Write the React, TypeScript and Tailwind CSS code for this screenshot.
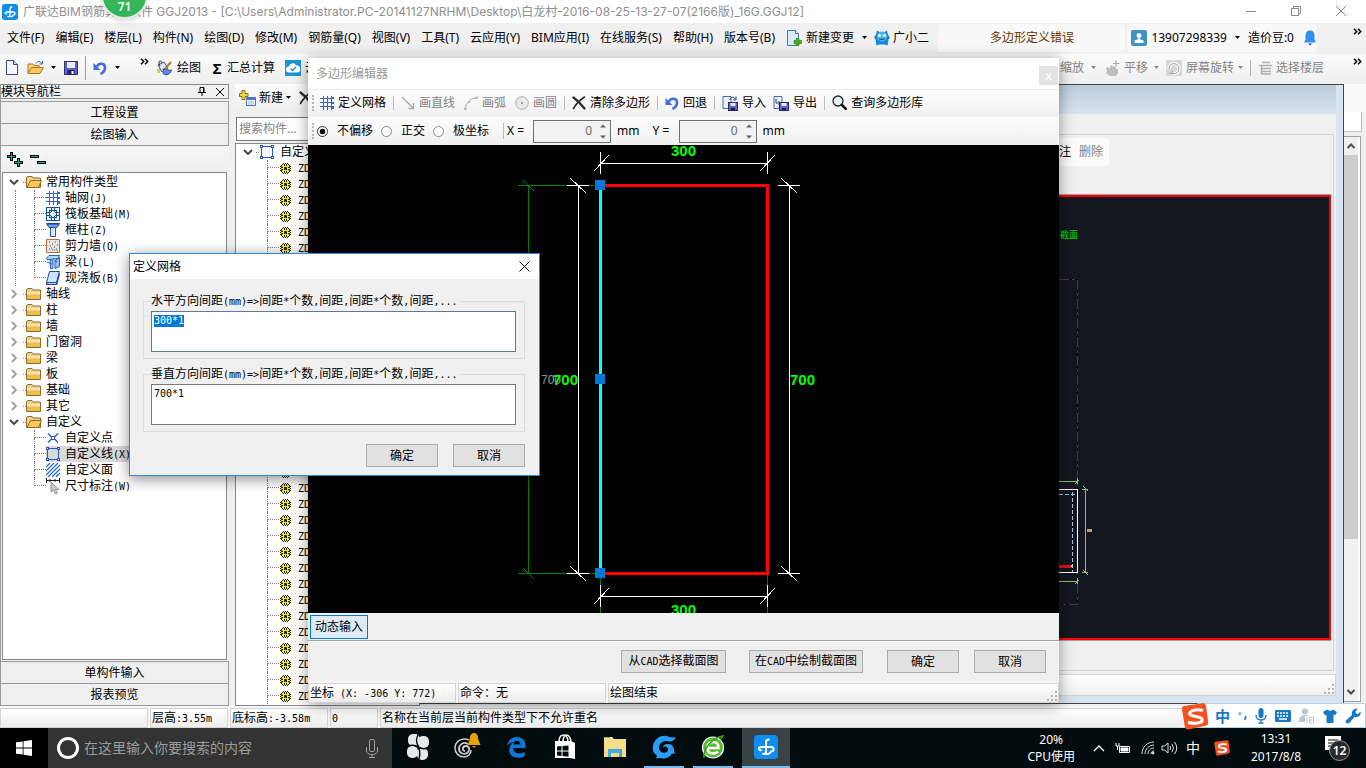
import type { ReactNode } from "react";
import clsx from "clsx";

interface IconProps {
  className?: string;
}

interface TreeItem {
  label: string;
  icon?: ReactNode;
  open?: boolean;
  selected?: boolean;
  children?: TreeItem[];
}

/* ---------- text ---------- */

// 宋体风格：中文 12px，西文半角 6px
function Song({ children }: { children: string }) {
  return (
    <span className="whitespace-pre text-[12px] leading-4">
      {children.split(/([\x20-\x7e]+)/).map((part, i) =>
        i % 2 === 1 ? (
          <span key={i} className="font-['DejaVu_Sans_Mono',monospace] text-[10px]">
            {part}
          </span>
        ) : (
          part
        ),
      )}
    </span>
  );
}

/* ---------- icons ---------- */

function Caret({ className }: IconProps) {
  return (
    <svg viewBox="0 0 5 3" className={clsx("h-[3px] w-[5px] shrink-0", className)} fill="currentColor">
      <path d="M0 0h5L2.5 3z" />
    </svg>
  );
}

function More() {
  return (
    <svg viewBox="0 0 9 7" className="h-[7px] w-[9px] shrink-0" fill="none" stroke="#000" strokeWidth="1.5">
      <path d="M1 .8l2.7 2.7L1 6.2M5 .8l2.7 2.7L5 6.2" />
    </svg>
  );
}

function LogoIcon({ className }: IconProps) {
  return (
    <svg viewBox="0 0 24 24" className={className} fill="none" stroke="#fff" strokeWidth="2" strokeLinecap="round">
      <rect width="24" height="24" rx="4" fill="#0f8ef2" stroke="none" />
      <path d="M12 12V7q0-2.500 2.800-2.500M12 12v4.500q0 2.500-3 2.500M12 12H7q-2 0-2 1.500t2 1.800M12 12h5q2.500 0 2.500 2.200T17 16.500M12 19h1q3 0 4-2.500" />
    </svg>
  );
}

function NewFileIcon() {
  return (
    <svg viewBox="0 0 12 15" className="h-[15px] w-3 shrink-0">
      <path d="M.5.5h7l4 4v10H.5z" fill="#f4f8fd" stroke="#33507c" />
      <path d="M7.500.5v4h4" fill="#c8d8ee" stroke="#33507c" />
    </svg>
  );
}

function OpenIcon() {
  return (
    <svg viewBox="0 0 17 15" className="h-[15px] w-[17px] shrink-0">
      <path d="M1 13V4h5l1 1.500h5V8" fill="#f5d77c" stroke="#a3772b" />
      <path d="M1 13.500L4.500 7.500h12L13 13.500z" fill="#f9c95b" stroke="#a3772b" />
      <path d="M9 3.500c2-3 4.500-2.500 5.500 0M15.500 1v3h-3" fill="none" stroke="#3c5da0" />
    </svg>
  );
}

function SaveIcon() {
  return (
    <svg viewBox="0 0 14 14" className="h-3.5 w-3.5 shrink-0">
      <rect x=".5" y=".5" width="13" height="13" fill="#5a5ed0" stroke="#30337c" />
      <rect x="3" y="1" width="8" height="6" fill="#e9ecf9" />
      <rect x="3.500" y="9" width="7" height="5" fill="#23265c" />
      <rect x="7.500" y="10" width="2" height="3" fill="#fff" />
    </svg>
  );
}

function UndoIcon() {
  return (
    <svg viewBox="0 0 14 14" className="h-3.5 w-3.5 shrink-0">
      <path d="M4 5.500C6 1.500 12 2 12 6.500c0 3-1.500 5-4.500 6.500" fill="none" stroke="#3f6fd8" strokeWidth="2.600" />
      <path d="M.5 2v7h7z" fill="#3f6fd8" />
    </svg>
  );
}

function PaintIcon() {
  return (
    <svg viewBox="0 0 17 16" className="h-4 w-[17px] shrink-0">
      <path d="M2 5l6-3 4 6-6 4z" fill="#dbe6f5" stroke="#3c5684" />
      <path d="M4 6C1 1 5-1 6 3" fill="none" stroke="#222" />
      <path d="M15 2L8 10" stroke="#b57b2c" strokeWidth="2" />
      <path d="M7 9c4 0 6 2 8.500 1-1 4-5 6-8 4-1-1.500 0-3-.5-5z" fill="#5c8ce0" stroke="#2f4f92" />
      <path d="M1 9h3v4H2z" fill="#e5c34b" />
    </svg>
  );
}

function CloudIcon() {
  return (
    <svg viewBox="0 0 16 16" className="h-4 w-4 shrink-0">
      <rect width="16" height="16" fill="#1d93d8" />
      <path d="M4 12.500a3 3 0 0 1 0-6 4 4 0 0 1 7.500-1 3.500 3.500 0 0 1 .5 7z" fill="#fff" />
      <path d="M5.500 8.500l2 2 3.500-3.500" fill="none" stroke="#1d93d8" strokeWidth="1.300" />
    </svg>
  );
}

function GridIcon() {
  return (
    <svg viewBox="0 0 14 14" className="h-3.5 w-3.5 shrink-0" shapeRendering="crispEdges">
      <path d="M0 2.500h14M0 6.500h14M0 10.500h14M3.500 0v14M7.500 0v14M11.500 0v14" stroke="#2f66d0" fill="none" />
      <path d="M12 1h2v2h-2zM12 6h2v2h-2zM12 11h2v2h-2z" fill="#2f66d0" />
    </svg>
  );
}

function CrossIcon() {
  return (
    <svg viewBox="0 0 14 14" className="h-3.5 w-3.5 shrink-0" fill="none" stroke="#2a2a2a" strokeLinecap="round">
      <path d="M1.500 1.500C5 4 9 8 12.500 12.500" strokeWidth="2.200" />
      <path d="M12.500 1C8 4 4 8 1.500 12.500" strokeWidth="1.600" />
    </svg>
  );
}

function TransferIcon({ out }: { out?: boolean }) {
  return (
    <svg viewBox="0 0 16 16" className="h-4 w-4 shrink-0">
      <path d="M1 1.500h8v12H1z" fill="#eef3fb" stroke="#4d68a3" />
      <path d={out ? "M3 4v4h4M5.500 6l2 2-2 2" : "M8 5c0-3 4-4 5-1M14 1.500V5h-3"} fill="none" stroke="#1d3a7a" />
      <rect x="6.500" y="7.500" width="9" height="8" fill="#5f5fd0" stroke="#29296e" />
      <rect x="8.500" y="8" width="5" height="3" fill="#e8e8fa" />
      <rect x="9" y="13" width="4" height="2.500" fill="#1c1c50" />
    </svg>
  );
}

function SearchIcon() {
  return (
    <svg viewBox="0 0 15 15" className="h-[15px] w-[15px] shrink-0">
      <circle cx="6" cy="6" r="5" fill="#dff1fb" stroke="#222" strokeWidth="1.300" />
      <path d="M9.800 9.800l4 4" stroke="#111" strokeWidth="2.600" strokeLinecap="round" />
    </svg>
  );
}

function FolderIcon({ open }: { open?: boolean }) {
  return (
    <svg viewBox="0 0 16 12" className="h-3 w-4 shrink-0">
      <path d="M.5 11.500v-10L2 .5h4l1 1.500h7.500v9.500z" fill="#f4d488" stroke="#8d6b2f" />
      {open ? (
        <path d="M1 11.500l3.500-7h11l-3 7z" fill="#fcc858" stroke="#8d6b2f" />
      ) : (
        <path d="M1 4h13v7H1z" fill="#f2bb4c" />
      )}
      {!open && <path d="M1 4h13v2.500H1z" fill="#fbe5ac" />}
    </svg>
  );
}

function RaftIcon() {
  return (
    <svg viewBox="0 0 14 14" className="h-3.5 w-3.5" shapeRendering="crispEdges" fill="none">
      <path d="M0 0h14v14H0z" fill="#e8f2fc" />
      <path d="M.5.5h13v13H.5zM3.500 3.500h7v7h-7zM5.500 1v12M8.500 1v12M1 5.500h12M1 8.500h12" stroke="#17519a" />
      <path d="M5 5h4v4H5z" fill="#e8f2fc" />
    </svg>
  );
}

function ColumnIcon() {
  return (
    <svg viewBox="0 0 14 14" className="h-3.5 w-3.5">
      <path d="M.5.5h13l-2.500 4H3z" fill="#6d9de6" stroke="#2a4e92" />
      <path d="M4.500 4.500h5v9h-5z" fill="#d6e6fb" stroke="#2a5bb0" />
      <path d="M1 1h12" stroke="#173a78" />
    </svg>
  );
}

function WallIcon() {
  return (
    <svg viewBox="0 0 14 14" className="h-3.5 w-3.5">
      <path d="M.5.5h13v13H.5z" fill="#e6e4e2" stroke="#c46a3d" />
      <path d="M3 3h1M6 5h1M9 3h1M4 7h1M8 8h1M11 6h1M3 10h1M6 11h1M10 10h1M11 12h1M8 11h1M5 9h1" stroke="#555" />
    </svg>
  );
}

function BeamIcon() {
  return (
    <svg viewBox="0 0 14 14" className="h-3.5 w-3.5">
      <path d="M.5 3L3 .5h10.500L12 3.500 1 4.500z" fill="#b8dbf8" stroke="#2667b5" />
      <path d="M4 4.500l3 1v8H4.500zM9 5.500l4.500-3v9L9 13.500z" fill="#8fc2f2" stroke="#2667b5" />
      <path d="M1 7l5 2M7 4l4 3" stroke="#2667b5" />
    </svg>
  );
}

function SlabIcon() {
  return (
    <svg viewBox="0 0 14 14" className="h-3.5 w-3.5">
      <path d="M3.500.5h10l-3 11H.5z" fill="#cfe1fb" stroke="#1d4e9e" />
      <path d="M.5 11.500v2h10l3-11" fill="none" stroke="#1d4e9e" strokeWidth="1.500" />
    </svg>
  );
}

function PointIcon() {
  return (
    <svg viewBox="0 0 14 14" className="h-3.5 w-3.5" fill="none" stroke="#2a5cbf">
      <path d="M2 2.500l3.500 3.500M12 2.500L8.500 6M2 11.500L5.500 8M12 11.500L8.500 8" strokeWidth="1.400" />
      <rect x="5.500" y="5.500" width="3" height="3" />
    </svg>
  );
}

function PolyIcon() {
  return (
    <svg viewBox="0 0 14 14" className="h-3.5 w-3.5 shrink-0" shapeRendering="crispEdges">
      <path d="M1.500 1.500h11v11h-11z" fill="none" stroke="#2059c0" />
      <path d="M0 0h3v3H0zM11 0h3v3h-3zM0 11h3v3H0zM11 11h3v3h-3z" fill="#2059c0" />
      <path d="M1 1h1v1H1zM12 1h1v1h-1zM1 12h1v1H1zM12 12h1v1h-1z" fill="#fff" />
    </svg>
  );
}

function HatchIcon() {
  return (
    <svg viewBox="0 0 14 14" className="h-3.5 w-3.5" stroke="#1f5fe0" strokeWidth="1.200">
      <path d="M0 4l4-4M0 8l8-8M0 12L12 0M2 14L14 2M6 14l8-8M10 14l4-4" />
    </svg>
  );
}

function DimIcon() {
  return (
    <svg viewBox="0 0 14 16" className="h-4 w-3.5">
      <path d="M.5 0v5M13.500 0v5M0 2.500h14M4 1v3M9 1v3" stroke="#222" fill="none" />
      <path d="M5 4v10l2.500-2 2 4 2-1-2-3.500H13z" fill="#c9c9c9" stroke="#777" strokeWidth=".7" />
    </svg>
  );
}

function GearIcon() {
  return (
    <svg viewBox="0 0 11 11" className="h-[11px] w-[11px] shrink-0" shapeRendering="crispEdges">
      <path d="M3 0h1v1h1V0h1v1h1V0h1v1h1v1h1v1h1v1h-1v1h1v1h-1v1h1v1h-1v1h-1v1H8v1H7v-1H6v1H5v-1H4v1H3v-1H2V9H1V8H0V7h1V6H0V5h1V4H0V3h1V2h1V1h1z" fill="#2e2d08" />
      <path d="M3 1h1v1H3zM7 1h1v1H7zM5 1h1v3H5zM2 2h2v1H2zM7 2h2v1H7zM2 3h1v1H2zM8 3h1v1H8zM1 5h3v1H1zM7 5h3v1H7zM3 3h2v1H3zM6 3h2v1H6zM3 4h1v3H3zM7 4h1v3H7zM3 7h5v1H3zM5 7h1v3H5zM2 7h1v2H2zM8 7h1v2H8zM3 8h1v2H3zM7 8h1v2H7z" fill="#f2ec1a" />
    </svg>
  );
}

function NewItemIcon() {
  return (
    <svg viewBox="0 0 17 16" className="h-4 w-[17px] shrink-0">
      <path d="M3 .5h3v3h3v3H6v3H3v-3H.5v-3H3z" fill="#f3d33c" stroke="#8a7212" />
      <path d="M7.500 7.500h9v8h-9z" fill="#fff" stroke="#4b79c9" />
      <path d="M7.500 7.500h9v2.500h-9z" fill="#4b79c9" />
      <path d="M9 12h6M9 14h6" stroke="#8fb0e6" />
    </svg>
  );
}

function Chevron({ open }: { open?: boolean }) {
  return (
    <svg viewBox="0 0 10 10" className="h-2.5 w-2.5" fill="none" stroke={open ? "#404040" : "#a0a0a0"} strokeWidth="1.800">
      <path d={open ? "M1 3l4 4 4-4" : "M3 1l4 4-4 4"} />
    </svg>
  );
}

function SogouIcon({ className }: IconProps) {
  return (
    <svg viewBox="0 0 28 28" className={className}>
      <path d="M.5 6Q.2 3.500 3 3L22 .3q3-.3 3.400 2.500L27.700 20q.3 3-2.500 3.500L7 27.500q-3 .5-3.500-2.500z" fill="#f4511e" />
      <path
        d="M21 7.500C15 6 8 8 8.500 11.500c.5 3.500 13 1.500 13 6 0 3.500-8 4.500-13.500 2.800"
        fill="none"
        stroke="#fff"
        strokeWidth="3.200"
        strokeLinecap="round"
      />
    </svg>
  );
}

function Grip() {
  return (
    <svg viewBox="0 0 11 11" className="h-[11px] w-[11px] self-end" fill="#b5b5b5">
      <path d="M8 0h2v2H8zM4 4h2v2H4zM8 4h2v2H8zM0 8h2v2H0zM4 8h2v2H4zM8 8h2v2H8z" />
    </svg>
  );
}

/* ---------- shared controls ---------- */

function ToolButton({ icon, children, disabled }: { icon?: ReactNode; children: ReactNode; disabled?: boolean }) {
  return (
    <button
      type="button"
      className={clsx(
        "flex shrink-0 items-center gap-1 whitespace-nowrap leading-4",
        disabled ? "text-[#848484]" : "text-black",
      )}
    >
      {icon}
      {children}
    </button>
  );
}

function Separator() {
  return <span className="h-3.5 w-px shrink-0 bg-[#bdbdbd]" />;
}

function PushButton({ children, className }: { children: string; className?: string }) {
  return (
    <button
      type="button"
      className={clsx("flex h-[23px] items-center justify-center border border-[#adadad] bg-[#e1e1e1]", className)}
    >
      <Song>{children}</Song>
    </button>
  );
}

function StatusCell({ children, className }: { children?: string; className?: string }) {
  return (
    <div
      className={clsx(
        "flex items-center overflow-hidden border border-[#d4d4d4] bg-linear-to-b from-white to-[#ececec] pl-px",
        className,
      )}
    >
      {children && <Song>{children}</Song>}
    </div>
  );
}

/* ---------- main window header ---------- */

const menus = [
  "文件(F)",
  "编辑(E)",
  "楼层(L)",
  "构件(N)",
  "绘图(D)",
  "修改(M)",
  "钢筋量(Q)",
  "视图(V)",
  "工具(T)",
  "云应用(Y)",
  "BIM应用(I)",
  "在线服务(S)",
  "帮助(H)",
  "版本号(B)",
];

function TitleBar() {
  return (
    <header className="relative flex h-[23px] shrink-0 items-center bg-white pl-0.5">
      <LogoIcon className="h-4 w-4" />
      <h1 className="ml-[5px] whitespace-nowrap font-['Inter','Noto_Sans_CJK_SC',sans-serif] leading-4 text-[#8f8f8f]">
        广联达BIM钢筋算量软件 GGJ2013 - [C:\Users\Administrator.PC-20141127NRHM\Desktop\白龙村-2016-08-25-13-27-07(2166版)_16G.GGJ12]
      </h1>
      <div className="ml-auto flex items-center gap-[35px] pr-5 pb-0.5">
        <button type="button" aria-label="最小化">
          <svg viewBox="0 0 10 10" className="h-2.5 w-2.5" stroke="#888">
            <path d="M0 5.500h10" />
          </svg>
        </button>
        <button type="button" aria-label="还原">
          <svg viewBox="0 0 10 10" className="h-2.5 w-2.5" stroke="#888" fill="none">
            <path d="M.5 2.500h7v7h-7zM2.500 2.500v-2h7v7h-2" />
          </svg>
        </button>
        <button type="button" aria-label="关闭">
          <svg viewBox="0 0 10 10" className="h-2.5 w-2.5" stroke="#888">
            <path d="M0 0l10 10M10 0L0 10" />
          </svg>
        </button>
      </div>
      <div className="absolute -top-[27px] left-[101px] flex h-[46px] w-[47px] items-end justify-center rounded-full border-2 border-[#e2e8e2] bg-linear-to-b from-[#3dbb5c] to-[#2fb457] pb-0.5 text-[12px] font-semibold leading-4 text-white shadow-md">
        71
      </div>
    </header>
  );
}

function MenuBar() {
  return (
    <nav className="flex h-[31px] shrink-0 items-center bg-[#f0f0f0] pb-0.5 pl-[7px]">
      <div className="flex gap-[11px]">
        {menus.map((m) => (
          <button key={m} type="button" className="whitespace-nowrap leading-4">
            {m}
          </button>
        ))}
      </div>
      <button type="button" className="ml-3 flex shrink-0 items-center gap-1 whitespace-nowrap leading-4">
        <svg viewBox="0 0 15 16" className="h-4 w-[15px]">
          <path d="M.5.5h8l3 3v12H.5z" fill="#d6ebfb" stroke="#3e7db4" />
          <path d="M8.500.5v3h3" fill="#fff" stroke="#3e7db4" />
          <path d="M9 8.500h3v2h2.500v3H12v2H9v-2H7v-3h2z" fill="#49ad1f" stroke="#2b7a0d" strokeWidth=".6" />
        </svg>
        新建变更
        <Caret className="ml-1" />
      </button>
      <button type="button" className="ml-[7px] flex shrink-0 items-center gap-[3px] whitespace-nowrap leading-4">
        <svg viewBox="0 0 16 16" className="h-4 w-4">
          <path d="M3 .5l2.500 1.500h5L13 .5l1 4 2 3-1.500 2-1 6-3-1h-5l-3 1-1-6L0 7.500l2-3z" fill="#178ad6" />
          <circle cx="8" cy="6.500" r="5" fill="#4db5ee" />
          <circle cx="5.500" cy="5.500" r="1.500" fill="#fff" />
          <circle cx="10.500" cy="5.500" r="1.500" fill="#fff" />
          <path d="M5 8.500q3 2.500 6 0" stroke="#064b80" fill="none" />
        </svg>
        广小二
      </button>
      <div className="ml-auto flex h-full shrink-0 items-center">
        <div className="flex h-7 w-[187px] items-center justify-center rounded bg-[#f8f8f8] text-[#663300]">
          <span className="leading-4">多边形定义错误</span>
        </div>
        <div className="ml-0.5 flex h-7 items-center rounded bg-[#f8f8f8] pl-1">
          <svg viewBox="0 0 16 16" className="h-4 w-4">
            <rect width="16" height="16" rx="2" fill="#3f92c9" />
            <path d="M8 3a2.500 2.500 0 0 1 1.500 4.500L8.500 9l4 1.500V13h-9v-2.500l4-1.500-1-1.500A2.500 2.500 0 0 1 8 3z" fill="#fff" />
          </svg>
          <button type="button" className="ml-1 flex items-center gap-2 leading-4">
            13907298339
            <Caret />
          </button>
          <span className="ml-2 whitespace-nowrap leading-4">造价豆:0</span>
          <svg viewBox="0 0 14 16" className="ml-[9px] h-4 w-3.5">
            <path d="M7 .5c3 0 4.500 2 4.500 5v4L13 12.500H1l1.500-3v-4c0-3 1.500-5 4.500-5z" fill="#2f90ee" />
            <path d="M5 13.500h4L7 15.500z" fill="#1b4a80" />
          </svg>
        </div>
        <button type="button" aria-label="更多" className="mb-3 ml-9 mr-1">
          <More />
        </button>
      </div>
    </nav>
  );
}

function MainToolbar() {
  return (
    <div className="flex h-[30px] shrink-0 items-center bg-linear-to-b from-[#fbfbfb] to-[#efefef] pb-[3px] pl-1.5">
      <button type="button" aria-label="新建">
        <NewFileIcon />
      </button>
      <button type="button" aria-label="打开" className="ml-[9px] flex items-center gap-[7px]">
        <OpenIcon />
        <Caret />
      </button>
      <button type="button" aria-label="保存" className="ml-2">
        <SaveIcon />
      </button>
      <span className="ml-[7px] h-6 w-px bg-[#9c9c9c]" />
      <button type="button" aria-label="撤销" className="ml-[7px] flex items-center gap-2">
        <UndoIcon />
        <Caret />
      </button>
      <span className="mb-3 ml-5">
        <More />
      </span>
      <div className="ml-[7px] flex items-center gap-2.5">
        <ToolButton icon={<PaintIcon />}>绘图</ToolButton>
        <ToolButton icon={<span className="w-3 text-[15px] font-bold">Σ</span>}>汇总计算</ToolButton>
        <ToolButton icon={<CloudIcon />}>云检查</ToolButton>
      </div>
      <div className="mt-[7px] ml-[366px] h-[22px] w-[62px] border border-[#555] bg-white" />
      <div className="ml-auto flex items-center text-[#848484]">
        <ToolButton disabled>缩放</ToolButton>
        <Caret className="ml-[7px]" />
        <span className="ml-[9px]">
          <ToolButton
            disabled
            icon={
              <svg viewBox="0 0 15 16" className="h-4 w-[15px]">
                <path d="M1 8l2-1 2 2 0-3 2-1 1 2 2-1 1 3 2 0v4l-2 3H5l-4-3 1-2z" fill="#bdbdbd" />
                <path d="M11 0v7M8 3.500h6.500" stroke="#a5a5a5" />
              </svg>
            }
          >
            平移
          </ToolButton>
        </span>
        <Caret className="ml-1.5" />
        <span className="ml-[7px]">
          <ToolButton
            disabled
            icon={
              <svg viewBox="0 0 16 16" className="h-4 w-4" fill="none">
                <rect width="16" height="16" fill="#d9d9d9" />
                <path d="M3 9a5 5 0 1 1 4 4.500" stroke="#fff" strokeWidth="3" />
                <path d="M3 9a5 5 0 1 1 4 4.500M3 13l4 .5-1-3" stroke="#a4a4a4" />
              </svg>
            }
          >
            屏幕旋转
          </ToolButton>
        </span>
        <Caret className="ml-1" />
        <span className="ml-[7px] h-4 w-px bg-[#b4b4b4]" />
        <span className="ml-[7px]">
          <ToolButton
            disabled
            icon={
              <svg viewBox="0 0 14 14" className="h-3.5 w-3.5" fill="none" stroke="#b0b0b0" strokeWidth="1.500">
                <path d="M4 1.500h8M1 4.500h13M4 7.500h9M4 10.500h9M4 13h9M3.500 4.500v9" />
              </svg>
            }
          >
            选择楼层
          </ToolButton>
        </span>
        <button type="button" aria-label="更多" className="mb-3 ml-[29px] mr-1">
          <More />
        </button>
      </div>
    </div>
  );
}

/* ---------- navigation panel ---------- */

const navTree: TreeItem[] = [
  {
    label: "常用构件类型",
    open: true,
    children: [
      { label: "轴网(J)", icon: <GridIcon /> },
      { label: "筏板基础(M)", icon: <RaftIcon /> },
      { label: "框柱(Z)", icon: <ColumnIcon /> },
      { label: "剪力墙(Q)", icon: <WallIcon /> },
      { label: "梁(L)", icon: <BeamIcon /> },
      { label: "现浇板(B)", icon: <SlabIcon /> },
    ],
  },
  { label: "轴线" },
  { label: "柱" },
  { label: "墙" },
  { label: "门窗洞" },
  { label: "梁" },
  { label: "板" },
  { label: "基础" },
  { label: "其它" },
  {
    label: "自定义",
    open: true,
    children: [
      { label: "自定义点", icon: <PointIcon /> },
      { label: "自定义线(X)", icon: <PolyIcon />, selected: true },
      { label: "自定义面", icon: <HatchIcon /> },
      { label: "尺寸标注(W)", icon: <DimIcon /> },
    ],
  },
];

function Elbow({ last }: { last?: boolean }) {
  return (
    <span className="h-4 w-3 shrink-0">
      <span className="block h-2 border-b border-l border-dotted border-[#808080]" />
      {!last && <span className="block h-2 border-l border-dotted border-[#808080]" />}
    </span>
  );
}

function NavBranch({ item, lastBranch }: { item: TreeItem; lastBranch: boolean }) {
  const children = item.children ?? [];
  return (
    <li>
      <div className="flex h-4 items-center">
        <span className="flex w-5 justify-center pl-0.5">
          <Chevron open={item.open} />
        </span>
        <span className="w-[3px] border-t border-dotted border-[#808080]" />
        <FolderIcon open={item.open} />
        <span className="ml-1 leading-4">
          <Song>{item.label}</Song>
        </span>
      </div>
      {children.length > 0 && (
        <ul>
          {children.map((c, i) => (
            <li key={c.label} className="flex h-4 items-center">
              <span className={clsx("ml-3 h-4 w-[19px] shrink-0", !lastBranch && "border-l border-dotted border-[#808080]")} />
              <Elbow last={i === children.length - 1} />
              <span className={clsx("flex h-4 flex-1 items-center gap-[5px]", c.selected && "bg-[#d9d9d9]")}>
                {c.icon}
                <Song>{c.label}</Song>
              </span>
            </li>
          ))}
        </ul>
      )}
    </li>
  );
}

function NavButton({ children }: { children: string }) {
  return (
    <button
      type="button"
      className="flex h-[22px] w-full shrink-0 items-center justify-center border-r border-b border-[#9a9a9a] bg-[#f0f0f0]"
    >
      <Song>{children}</Song>
    </button>
  );
}

function NavPanel() {
  return (
    <aside className="flex w-[229px] shrink-0 flex-col border-l border-[#9a9a9a]">
      <div className="flex h-[15px] shrink-0 items-center border border-l-0 border-[#8a8a8a] pr-1">
        <Song>模块导航栏</Song>
        <button type="button" aria-label="固定" className="ml-auto">
          <svg viewBox="0 0 8 9" className="h-[9px] w-2" stroke="#000" fill="none">
            <path d="M2 .5h4v5H2zM0 5.500h8M4 5.500V9M5.500 1v4" />
          </svg>
        </button>
        <button type="button" aria-label="关闭" className="ml-2.5">
          <svg viewBox="0 0 8 8" className="h-2 w-2" stroke="#000">
            <path d="M0 0l8 8M8 0L0 8" />
          </svg>
        </button>
      </div>
      <div className="mt-0.5 shrink-0 border-t border-[#9a9a9a]">
        <NavButton>工程设置</NavButton>
        <NavButton>绘图输入</NavButton>
      </div>
      <div className="flex h-[26px] shrink-0 items-center gap-[7px] bg-linear-to-b from-[#f7f7f7] to-[#eee] pl-1.5">
        <button type="button" aria-label="全部展开">
          <svg viewBox="0 0 16 15" className="h-[15px] w-4" shapeRendering="crispEdges">
            <path d="M3 0h3v3h3v3H6v3H3V6H0V3h3zM10 6h3v3h3v3h-3v3h-3v-3H7V9h3z" fill="#000" />
            <path d="M4 1h1v3h3v1H5v3H4V5H1V4h3zM11 7h1v3h3v1h-3v3h-1v-3H8v-1h3z" fill="#1da899" />
          </svg>
        </button>
        <button type="button" aria-label="全部折叠">
          <svg viewBox="0 0 16 15" className="h-[15px] w-4" shapeRendering="crispEdges">
            <path d="M0 3h9v3H0zM7 9h9v3H7z" fill="#000" />
            <path d="M1 4h7v1H1zM8 10h7v1H8z" fill="#1da899" />
          </svg>
        </button>
      </div>
      <ul className="mr-0.5 ml-px flex-1 overflow-hidden border border-[#828790] bg-white pt-px">
        {navTree.map((t, i) => (
          <NavBranch key={`${t.label}${i}`} item={t} lastBranch={i === navTree.length - 1} />
        ))}
      </ul>
      <div className="mt-px shrink-0 border-t border-[#9a9a9a]">
        <NavButton>单构件输入</NavButton>
        <NavButton>报表预览</NavButton>
      </div>
    </aside>
  );
}

/* ---------- component list ---------- */

function ComponentPanel() {
  const rows = Array.from({ length: 34 }, (_, i) => `ZDX-${i + 1}`);
  return (
    <section className="ml-1.5 flex w-[185px] shrink-0 flex-col">
      <div className="flex h-7 shrink-0 items-center gap-1 bg-linear-to-b from-[#fbfbfb] to-[#efefef] pb-px pl-1">
        <button type="button" className="flex items-center gap-[3px] leading-4">
          <NewItemIcon />
          新建
          <Caret />
        </button>
        <button type="button" aria-label="删除" className="ml-1">
          <CrossIcon />
        </button>
      </div>
      <input
        type="text"
        aria-label="搜索构件"
        placeholder="搜索构件..."
        className="mt-[5px] ml-px h-6 shrink-0 border border-[#7a7a7a] bg-white px-0.5 pb-0.5 leading-4 placeholder:text-[#848484]"
      />
      <div className="mt-0.5 flex-1 overflow-hidden border border-[#828790] bg-white">
        <div className="flex h-4 items-center">
          <span className="flex w-5 justify-center pl-1">
            <Chevron open />
          </span>
          <span className="mr-px w-[3px] border-t border-dotted border-[#808080]" />
          <PolyIcon />
          <span className="ml-1.5 leading-4">
            <Song>自定义线</Song>
          </span>
        </div>
        <ul className="pl-[31px]">
          {rows.map((r) => (
            <li key={r} className="flex h-4 items-center">
              <Elbow />
              <span className="ml-px flex">
                <GearIcon />
              </span>
              <span className="ml-[7px] leading-4">
                <Song>{r}</Song>
              </span>
            </li>
          ))}
        </ul>
      </div>
    </section>
  );
}

/* ---------- CAD window behind the dialogs ---------- */

function CadWindow() {
  return (
    <section className="mb-0.5 flex min-w-0 flex-1 flex-col border-t border-r border-b border-[#444] bg-[#d7e3f1] pr-[7px] pb-[7px]">
      <div className="h-[29px] shrink-0 bg-linear-to-b from-[#bccbdb] to-[#d7e3f1]" />
      <div className="flex flex-1 flex-col bg-[#f0f0f0] pt-5">
        <div className="mr-0.5 flex flex-1 flex-col border-y border-r border-[#d5d5d5] pr-0.5">
          <div className="mt-[3px] flex h-[57px] shrink-0 justify-end border-b border-[#a0a0a0]">
            <div className="mr-[222px] flex h-7 items-center gap-2 rounded bg-[#fafafa] pr-1.5 pl-2 leading-4">
              <button type="button">标注</button>
              <button type="button" className="text-[#848484]">
                删除
              </button>
            </div>
          </div>
          <div className="flex flex-1 justify-end overflow-hidden border-2 border-[#f00] bg-[#14171f]">
            <svg viewBox="1059 197 270 440" className="h-[440px] w-[270px]" fill="none" shapeRendering="crispEdges">
              <text x="1060" y="238" fontSize="9" fill="#00e000" fontFamily="Noto Sans CJK SC">
                截面
              </text>
              <path d="M1059 279.500h18.500V604H1059" stroke="#000" />
              <path d="M1059 279.500h18.500V604H1059" stroke="#343b47" strokeDasharray="10 3 3 3" />
              <path d="M1059 481.500h19M1077.500 478v6M1075 484l4-4M1059 581.500h19M1077.500 578v6M1075 584l4-4" stroke="#7cc867" />
              <path d="M1059 489.500h18.500v83H1059" stroke="#fff" />
              <path d="M1059 494.500h18M1072.500 491v81" stroke="#000" />
              <path d="M1059 494.500h18M1072.500 492v80" stroke="#9cc8f0" strokeDasharray="4 2" />
              <path d="M1059 566.500h13" stroke="#d8141e" strokeWidth="3" />
              <path d="M1071 565h2v2h-2z" fill="#f0e060" />
              <path d="M1085.500 489v84M1082 489.500h6M1083 486l5 5M1082 572.500h6M1083 570l5 5" stroke="#7cc867" />
              <path d="M1087 530.500h5" stroke="#c09a78" strokeWidth="3" />
            </svg>
          </div>
          <div className="h-[30px] shrink-0 border-t border-[#a0a0a0]" />
        </div>
        <div className="mt-[3px] flex h-[22px] shrink-0 justify-end border border-[#d4d4d4] bg-linear-to-b from-white to-[#f0f0f0]">
          <Grip />
        </div>
      </div>
    </section>
  );
}

function ScrollColumn() {
  return (
    <div className="flex w-[22px] shrink-0 flex-col">
      <div className="h-7 shrink-0 bg-[#fafafa]" />
      <div className="mr-1 h-5 shrink-0 border-r border-b border-[#c0c0c0] bg-white" />
      <div className="mt-1 mr-[5px] mb-1 flex flex-1 flex-col border-y border-r border-[#a0a0a0] bg-white pr-0.5">
        <div className="flex flex-1 flex-col bg-[#f0f0f0]">
          <div className="flex h-[18px] shrink-0 items-center justify-center">
            <svg viewBox="0 0 8 6" className="h-1.5 w-2" fill="none" stroke="#505050" strokeWidth="2">
              <path d="M.5 5L4 1.500 7.500 5" />
            </svg>
          </div>
          <div className="flex-[384] bg-[#cdcdcd]" />
          <div className="flex-[144]" />
          <div className="flex h-[18px] shrink-0 items-center justify-center">
            <svg viewBox="0 0 8 6" className="h-1.5 w-2" fill="none" stroke="#505050" strokeWidth="2">
              <path d="M.5 1L4 4.500 7.500 1" />
            </svg>
          </div>
        </div>
      </div>
    </div>
  );
}

/* ---------- polygon editor ---------- */

const offsets = ["不偏移", "正交", "极坐标"];

function OffsetInput({ axis }: { axis: string }) {
  return (
    <label className="flex items-center gap-1.5 leading-4">
      <span className="w-5 whitespace-nowrap">{axis} =</span>
      <span className="flex h-[23px] w-[78px] items-center border border-[#6f6f6f] bg-[#f2f2f2] pr-1">
        <input
          type="text"
          defaultValue="0"
          className="w-full min-w-0 bg-transparent pr-2 text-right leading-4 text-[#6d6d6d]"
        />
        <svg viewBox="0 0 6 15" className="h-[15px] w-1.5 shrink-0" fill="#606060">
          <path d="M0 3.500h6L3 .5zM0 11.500h6l-3 3z" />
        </svg>
      </span>
      <span>mm</span>
    </label>
  );
}

function PolygonCanvas() {
  return (
    <svg
      viewBox="308 145 751 468"
      preserveAspectRatio="xMidYMin slice"
      className="min-h-0 w-full flex-1 bg-black"
      fill="none"
      shapeRendering="crispEdges"
    >
      <g stroke="#008000">
        <path d="M518 185.500h80M518 573.500h80M528.500 185v388M600.500 573v40M767.500 573v40" />
        <path d="M523 180l11 11M523 568l11 11" />
      </g>
      <g stroke="#fff">
        <path d="M600 163.500h168M600.500 152v22M767.500 152v22M594 171l15-16M760 171l15-16" />
        <path d="M600 596.500h168M600.500 585v22M767.500 585v22M594 604l15-16M760 604l15-16" />
        <path d="M578.500 185v388M567 185.500h22M567 573.500h22M570 178l16 15M570 566l16 15" />
        <path d="M789.500 185v388M778 185.500h22M778 573.500h22M781 178l16 15M781 566l16 15" />
      </g>
      <path d="M600 185.500h167.500v388H600" stroke="#f00" strokeWidth="3" />
      <path d="M600.500 185v388" stroke="#0ff" strokeWidth="3" />
      <path d="M595 180h10v10h-10zM595 374h10v10h-10zM595 568h10v10h-10z" fill="#0078d7" />
      <text x="541" y="384" fontSize="12" fill="#a0a0a0" fontFamily="Liberation Sans">
        700
      </text>
      <g fill="#0f0" fontFamily="Liberation Sans" fontWeight="bold" fontSize="15">
        <text x="671" y="156">300</text>
        <text x="671" y="615">300</text>
        <text x="553" y="385">700</text>
        <text x="790" y="385">700</text>
      </g>
    </svg>
  );
}

function PolygonEditor() {
  return (
    <section
      aria-label="多边形编辑器"
      className="absolute top-[58px] left-[308px] flex h-[645px] w-[751px] flex-col bg-[#f0f0f0] shadow-[0_2px_14px_rgba(0,0,0,0.4)]"
    >
      <div className="flex h-[31px] shrink-0 items-center justify-between bg-white pr-px pl-2">
        <h2 className="leading-4 text-[#999]">多边形编辑器</h2>
        <button
          type="button"
          aria-label="关闭"
          className="mt-1 flex h-[19px] w-[19px] items-center justify-center bg-[#e3e3e3] leading-4 text-white"
        >
          x
        </button>
      </div>

      <div className="flex h-7 shrink-0 items-center gap-[7px] border-t border-[#ededed] bg-linear-to-b from-[#fdfdfd] to-[#f0f0f0] pb-0.5 pl-1">
        <span className="-mr-0.5 h-4 w-[3px] border-l-2 border-dotted border-[#b8b8b8]" />
        <ToolButton icon={<GridIcon />}>定义网格</ToolButton>
        <Separator />
        <div className="flex gap-[9px]">
          <ToolButton
            disabled
            icon={
              <svg viewBox="0 0 14 14" className="h-3.5 w-3.5" fill="none" stroke="#a8a8a8" strokeWidth="1.300">
                <path d="M1 1l11 11M12.500 7v5.500H7.500" />
              </svg>
            }
          >
            画直线
          </ToolButton>
          <ToolButton
            disabled
            icon={
              <svg viewBox="0 0 14 14" className="h-3.5 w-3.5" fill="none" stroke="#a8a8a8">
                <path d="M1.500 12.500C2 7 6 2 12 2" />
                <path d="M0 11.500h2.500V14H0zM11.500.5H14V3h-2.500zM4 5h2v2H4z" fill="#bbb" stroke="none" />
              </svg>
            }
          >
            画弧
          </ToolButton>
          <ToolButton
            disabled
            icon={
              <svg viewBox="0 0 14 14" className="h-3.5 w-3.5" fill="none" stroke="#b0b0b0">
                <circle cx="7" cy="7" r="6.300" fill="#e8e8e8" />
                <path d="M6 6h2v2H6z" fill="#a0a0a0" stroke="none" />
              </svg>
            }
          >
            画圆
          </ToolButton>
        </div>
        <Separator />
        <ToolButton icon={<CrossIcon />}>清除多边形</ToolButton>
        <Separator />
        <ToolButton icon={<UndoIcon />}>回退</ToolButton>
        <Separator />
        <ToolButton icon={<TransferIcon />}>导入</ToolButton>
        <ToolButton icon={<TransferIcon out />}>导出</ToolButton>
        <Separator />
        <ToolButton icon={<SearchIcon />}>查询多边形库</ToolButton>
      </div>

      <div className="flex h-7 shrink-0 items-center bg-linear-to-b from-[#fdfdfd] to-[#f0f0f0] pl-1">
        <span className="h-4 w-[3px] border-l-2 border-dotted border-[#b8b8b8]" />
        <div className="ml-0.5 flex gap-2">
          {offsets.map((o, i) => (
            <label key={o} className="flex items-center gap-[9px] leading-4">
              <input
                type="radio"
                name="offset"
                defaultChecked={i === 0}
                className="h-[11px] w-[11px] appearance-none rounded-full border border-[#8a8a8a] bg-white checked:border-[#333] checked:bg-[radial-gradient(#000_40%,#fff_50%)]"
              />
              {o}
            </label>
          ))}
        </div>
        <span className="mr-[3px] ml-3.5 h-4 w-px bg-[#bdbdbd]" />
        <div className="flex gap-[13px]">
          <OffsetInput axis="X" />
          <OffsetInput axis="Y" />
        </div>
      </div>

      <PolygonCanvas />

      <div className="flex h-7 shrink-0 items-center border-b border-[#a0a0a0] pl-0.5">
        <button
          type="button"
          className="h-6 w-[58px] border border-[#0078d7] bg-[#dcebf7] text-center leading-4 whitespace-nowrap"
        >
          动态输入
        </button>
      </div>
      <div className="flex h-10 shrink-0 items-center justify-end border-t border-white pr-[13px]">
        <PushButton className="w-[105px]">从CAD选择截面图</PushButton>
        <PushButton className="ml-[23px] w-[114px]">在CAD中绘制截面图</PushButton>
        <PushButton className="ml-6 w-[72px]">确定</PushButton>
        <PushButton className="ml-[15px] w-[72px]">取消</PushButton>
      </div>
      <div className="flex h-[22px] shrink-0 gap-0.5 bg-[#f6f6f6] pt-0.5">
        <StatusCell className="w-[148px]">坐标 (X: -306 Y: 772)</StatusCell>
        <StatusCell className="w-[148px]">命令：无</StatusCell>
        <div className="flex flex-1 items-center justify-between border border-[#d4d4d4] bg-linear-to-b from-white to-[#ececec] pl-px">
          <Song>绘图结束</Song>
          <Grip />
        </div>
      </div>
    </section>
  );
}

/* ---------- grid dialog ---------- */

interface SpacingFieldProps {
  id: string;
  legend: string;
  value: string;
  focused?: boolean;
}

function SpacingField({ id, legend, value, focused }: SpacingFieldProps) {
  return (
    <fieldset className="h-[58px] border border-t-0 border-[#dcdcdc]">
      <div className="-mt-2 flex h-4 items-center">
        <span className="w-[7px] border-t border-[#dcdcdc]" />
        <label htmlFor={id} className="pr-[3px] leading-4">
          <Song>{legend}</Song>
        </label>
        <span className="flex-1 border-t border-[#dcdcdc]" />
      </div>
      <div className="mt-0.5 pr-2 pl-[7px]">
        <textarea
          id={id}
          defaultValue={value}
          autoFocus={focused}
          onFocus={(e) => e.currentTarget.select()}
          className={clsx(
            "block h-[41px] w-full resize-none border bg-white px-0.5 py-[3px] font-['DejaVu_Sans_Mono',monospace] text-[10px] leading-3 outline-none selection:bg-[#0078d7] selection:text-white",
            focused ? "border-[#5b7a99]" : "border-[#7a7a7a]",
          )}
        />
      </div>
    </fieldset>
  );
}

function GridDialog() {
  return (
    <section
      role="dialog"
      aria-label="定义网格"
      className="absolute top-[253px] left-[129px] w-[411px] border border-[#2f86dc] bg-[#f0f0f0] shadow-[0_3px_14px_rgba(0,0,0,0.45)]"
    >
      <div className="flex h-[25px] items-center justify-between bg-white pr-[9px] pl-[3px]">
        <h2 className="leading-4">定义网格</h2>
        <button type="button" aria-label="关闭">
          <svg viewBox="0 0 11 11" className="h-[11px] w-[11px]" stroke="#000">
            <path d="M.5.5l10 10M10.500.5l-10 10" />
          </svg>
        </button>
      </div>
      <div className="pt-[22px] pr-3.5 pb-2 pl-[13px]">
        <div className="flex flex-col gap-[15px]">
          <SpacingField id="horizontal" legend="水平方向间距(mm)=>间距*个数,间距,间距*个数,间距,..." value="300*1" focused />
          <SpacingField id="vertical" legend="垂直方向间距(mm)=>间距*个数,间距,间距*个数,间距,..." value="700*1" />
        </div>
        <div className="mt-3 flex justify-end gap-[15px]">
          <PushButton className="w-[72px]">确定</PushButton>
          <PushButton className="w-[72px]">取消</PushButton>
        </div>
      </div>
    </section>
  );
}

/* ---------- status bar and taskbar ---------- */

function ImeBar() {
  return (
    <div className="absolute right-0 bottom-10 flex h-[25px] w-[171px] items-center gap-2 rounded-l border border-[#b8d0e6] bg-white pr-1 pl-[19px] text-[#1878c8]">
      <SogouIcon className="absolute -top-px -left-[15px] h-[27px] w-7" />
      <span className="text-[15px] leading-4 font-bold">中</span>
      <svg viewBox="0 0 12 14" className="h-3.5 w-3" fill="none" stroke="currentColor">
        <circle cx="2.500" cy="4" r="1.500" />
        <path d="M9.500 7q2 2-1 5" strokeWidth="2.200" />
      </svg>
      <svg viewBox="0 0 12 16" className="h-4 w-3 shrink-0" fill="currentColor">
        <rect x="3.500" width="5" height="10" rx="2.500" />
        <path d="M1 7q0 5 5 5t5-5M6 12v3M3.500 15h5" fill="none" stroke="currentColor" strokeWidth="1.300" />
      </svg>
      <svg viewBox="0 0 16 12" className="h-3 w-4 shrink-0">
        <rect width="16" height="12" rx="1" fill="currentColor" />
        <path d="M2 3h12M2 6h12" stroke="#fff" strokeDasharray="2 1" strokeWidth="1.500" />
        <path d="M4 9h8" stroke="#fff" strokeWidth="1.500" />
      </svg>
      <svg viewBox="0 0 16 16" className="h-4 w-4 shrink-0" fill="#b7c5d6">
        <circle cx="6" cy="3.500" r="3" />
        <path d="M0 14c0-5 2-7 6-7s5 2 5 3v4z" />
        <rect x="6" y="8" width="10" height="8" fill="#fff" />
        <path d="M8 9v6M10.500 9h4v6h-4V9M10.500 12h3" stroke="#b7c5d6" fill="none" />
      </svg>
      <svg viewBox="0 0 14 14" className="h-3.5 w-3.5 shrink-0" fill="currentColor">
        <path d="M4 .5q3 2.500 6 0l4 2.500-2 3.500-1.500-1V14h-7V5.500L2 6.500 0 3z" />
      </svg>
      <svg viewBox="0 0 16 16" className="h-4 w-4 shrink-0" fill="currentColor">
        <path d="M1 12.500L7 7C6 3 9 0 13 .8L10.500 3.500l.5 2 2 .5L15.500 3.500C16.500 7.500 13 10 9.500 9L4 15.300Q2.500 16 1.200 14.800T1 12.500z" />
      </svg>
    </div>
  );
}

function StatusBar() {
  return (
    <footer className="flex h-[22px] shrink-0 gap-0.5 bg-[#f6f6f6] pt-0.5">
      <StatusCell className="w-[148px]" />
      <StatusCell className="w-[78px]">层高:3.55m</StatusCell>
      <StatusCell className="w-[98px]">底标高:-3.58m</StatusCell>
      <StatusCell className="w-12">0</StatusCell>
      <StatusCell className="flex-1">名称在当前层当前构件类型下不允许重名</StatusCell>
    </footer>
  );
}

function TaskButton({ label, running, active, children }: { label: string; running?: boolean; active?: boolean; children: ReactNode }) {
  return (
    <button
      type="button"
      aria-label={label}
      className={clsx(
        "flex h-10 items-center justify-center border-b-2",
        active ? "w-12 bg-[#3b4246]" : "w-10",
        running || active ? "border-[#76b9ed]" : "border-transparent",
      )}
    >
      {children}
    </button>
  );
}

function Taskbar() {
  return (
    <div className="flex h-10 shrink-0 items-center bg-[#020b0e] text-white">
      <button type="button" aria-label="开始" className="flex h-10 w-12 items-center justify-center bg-black">
        <svg viewBox="0 0 16 16" className="h-4 w-4" fill="#fff">
          <path d="M0 2.300l6.700-.9v6.200H0zM7.500 1.300L16 0v7.600H7.500zM0 8.400h6.700v6.200L0 13.700zM7.500 8.400H16V16l-8.500-1.200z" />
        </svg>
      </button>
      <div className="flex h-10 w-[344px] items-center bg-[#333] pr-3.5 pl-[9px]">
        <span className="h-[22px] w-[22px] shrink-0 rounded-full border-3 border-white" />
        <input
          type="text"
          aria-label="搜索"
          placeholder="在这里输入你要搜索的内容"
          className="ml-[5px] min-w-0 flex-1 bg-transparent text-[14px] leading-5 placeholder:text-[#9b9b9b]"
        />
        <svg viewBox="0 0 12 19" className="h-[19px] w-3" fill="none" stroke="#a0a0a0">
          <rect x="3.500" y=".5" width="5" height="12" rx="1.500" />
          <path d="M.5 8v4q0 3.500 5.500 3.500t5.500-3.500V8M6 15.500V18M3 18.500h6" />
        </svg>
      </div>
      <div className="flex w-[398px] justify-between pl-1.5">
        <TaskButton label="风扇">
          <svg viewBox="0 0 24 28" className="h-7 w-6 shrink-0" fill="#e8e8e8">
            <rect x="2" y="1" width="12" height="12" rx="5" />
            <rect x="12" y="3" width="11" height="12" rx="5" />
            <rect x="1" y="13" width="11" height="12" rx="5" />
            <rect x="11" y="15" width="11" height="12" rx="5" />
            <path d="M12 2q-3 5 0 11t1 13M2 13q6-2 10 1t11 1" fill="none" stroke="#020b0e" strokeWidth="1.400" />
          </svg>
        </TaskButton>
        <TaskButton label="提醒">
          <svg viewBox="0 0 30 30" className="h-[30px] w-[30px] shrink-0" fill="none" stroke="#ccc">
            <path d="M17 8C9 5 3 10 3 16c0 5 4 9 9 9 4 0 7-3 7-7" strokeWidth="1.500" />
            <path d="M16 12c-5-3-9 1-9 5s5 6 8 4 3-7-1-7-4 5-1 5" strokeWidth="1.800" />
            <path d="M22 1c4 0 4 4 4.500 7l2 5h-13l2-5C18 5 18 1 22 1z" fill="#e6a300" stroke="none" />
            <path d="M20 14h4l-2 2z" fill="#e6a300" stroke="none" />
          </svg>
        </TaskButton>
        <TaskButton label="Edge">
          <svg viewBox="0 0 22 24" className="h-[22px] w-5 shrink-0">
            <path
              d="M1 11C2 4 7 1 12 1c6 0 9.500 4 9.500 9v3H8c0 4 3 6 6.500 6 2.500 0 4.500-.7 6-1.700v4.500C18.500 23 16 23.800 13.500 23.800 7 23.800 3.500 20 3.500 15c0-4 2.500-7 6-8.500C5.500 6.500 2.500 8.500 1 11zm7.200-1.800h7.600c0-2.500-1.300-4-3.700-4-2.200 0-3.600 1.800-3.900 4z"
              fill="#0f78d4"
            />
          </svg>
        </TaskButton>
        <TaskButton label="应用商店">
          <svg viewBox="0 0 22 28" className="h-7 w-[22px] shrink-0">
            <path d="M1 8h16l4 2v16l-5-1H1z" fill="#fff" />
            <path d="M5 9c0-9 8-9 9-1M9 8c1-8 6-8 8 0" fill="none" stroke="#fff" strokeWidth="1.500" />
            <path d="M3 13.500l4.500-.5v4.500H3zM8.500 13l6-.6v5.100h-6zM3 18.500h4.500V23L3 22.500zM8.500 18.500h6v5.200l-6-.6z" fill="#020b0e" />
          </svg>
        </TaskButton>
        <TaskButton label="文件资源管理器">
          <svg viewBox="0 0 22 22" className="h-[22px] w-[22px] shrink-0">
            <path d="M0 1h8l2 2h12v18H0z" fill="#f7dd86" />
            <path d="M1 1h5v1H1z" fill="#5bbf52" />
            <path d="M4 21v-8h14v8h-3v-4H7v4z" fill="#3aaee0" />
          </svg>
        </TaskButton>
        <TaskButton label="广联达" running>
          <svg viewBox="0 0 24 24" className="h-6 w-6 shrink-0">
            <path
              d="M24 2c-1 3-4 5-7 4.500C12 4.500 7 8 7 12.500c0 4 3.500 6 6.500 5 3-1 3.500-4 1-5.500-1.500-1-3-.5-3.500.500C11 9.500 14 8.500 17 9c4 .8 5.500 4 5 7l1 3-3-.5C18 22 15 23.500 11 23.500l-3-.5-4 .5 1-3C2 18.500 0 15.500 1 11 2 4 9-1 16 1.500c3 1 6 1.500 8 .5z"
              fill="#2a9df4"
            />
          </svg>
        </TaskButton>
        <TaskButton label="浏览器" running>
          <svg viewBox="0 0 24 24" className="h-6 w-6 shrink-0">
            <circle cx="12" cy="12.500" r="10.500" fill="#55bb33" stroke="#fff" strokeWidth="1.200" />
            <path d="M6.500 13h11q0-6-5.500-6t-5.500 6q0 5.500 5.500 5.500 3 0 5-2" fill="none" stroke="#fff" strokeWidth="2.600" />
            <path d="M3 23C2 15 10 3 22 1q-1 2-2.500 3" fill="none" stroke="#3b9a22" strokeWidth="1.500" />
          </svg>
        </TaskButton>
        <TaskButton label="钢筋算量" active>
          <LogoIcon className="h-6 w-6" />
        </TaskButton>
      </div>
      <div className="ml-auto flex items-center leading-4">
        <div className="text-center leading-[17px]">
          20%
          <br />
          CPU使用
        </div>
        <svg viewBox="0 0 12 8" className="ml-[18px] h-2 w-3" fill="none" stroke="#fff" strokeWidth="1.300">
          <path d="M1 7l5-5 5 5" />
        </svg>
        <svg viewBox="0 0 16 12" className="ml-2.5 h-3 w-4" fill="none" stroke="#fff">
          <path d="M4.500 4.500h10v6h-10zM1 1v3h3V1M2.500 4v4" />
          <path d="M6 6h7v3H6z" fill="#fff" />
        </svg>
        <svg viewBox="0 0 14 14" className="ml-2.5 h-3.5 w-3.5" fill="none" stroke="#ddd">
          <path d="M1 13C1 6 6 1 13 1M4 13c0-5 4-9 9-9M7 13c0-3 2.500-6 6-6M10 13c0-2 1-3 3-3" />
          <circle cx="12" cy="12" r="1" fill="#fff" />
        </svg>
        <svg viewBox="0 0 17 14" className="ml-1.5 h-3.5 w-[17px]" fill="none" stroke="#ddd">
          <path d="M1 5h2.500L7 2v10L3.500 9H1zM9 5q1.500 2 0 4M11 3q3 4 0 8M13.500 1q4.500 6 0 12" />
        </svg>
        <span className="ml-2 text-[14px]">中</span>
        <SogouIcon className="ml-3.5 h-4 w-4" />
        <div className="ml-5 w-[52px] text-center leading-[18px] whitespace-nowrap">
          13:31
          <br />
          2017/8/8
        </div>
        <div className="relative ml-[23px] h-6 w-[41px]">
          <svg viewBox="0 0 16 18" className="h-[18px] w-4">
            <path d="M0 0h16v14h-6l-4 4v-4H0z" fill="#fff" />
            <path d="M3 4h10M3 7h10M3 10h6" stroke="#000" />
          </svg>
          <span className="absolute top-1 left-1 flex h-[21px] w-[21px] items-center justify-center rounded-full border border-[#999] bg-[#2a2a2a] text-[12px] leading-4 font-semibold">
            12
          </span>
        </div>
      </div>
    </div>
  );
}

export default function App() {
  return (
    <div className="relative flex h-screen flex-col overflow-hidden bg-[#f0f0f0] font-['Noto_Sans','Noto_Sans_CJK_SC',sans-serif] text-[12px] text-black">
      <TitleBar />
      <MenuBar />
      <MainToolbar />
      <main className="flex min-h-0 flex-1">
        <NavPanel />
        <ComponentPanel />
        <CadWindow />
        <ScrollColumn />
      </main>
      <StatusBar />
      <Taskbar />
      <PolygonEditor />
      <GridDialog />
      <ImeBar />
    </div>
  );
}
